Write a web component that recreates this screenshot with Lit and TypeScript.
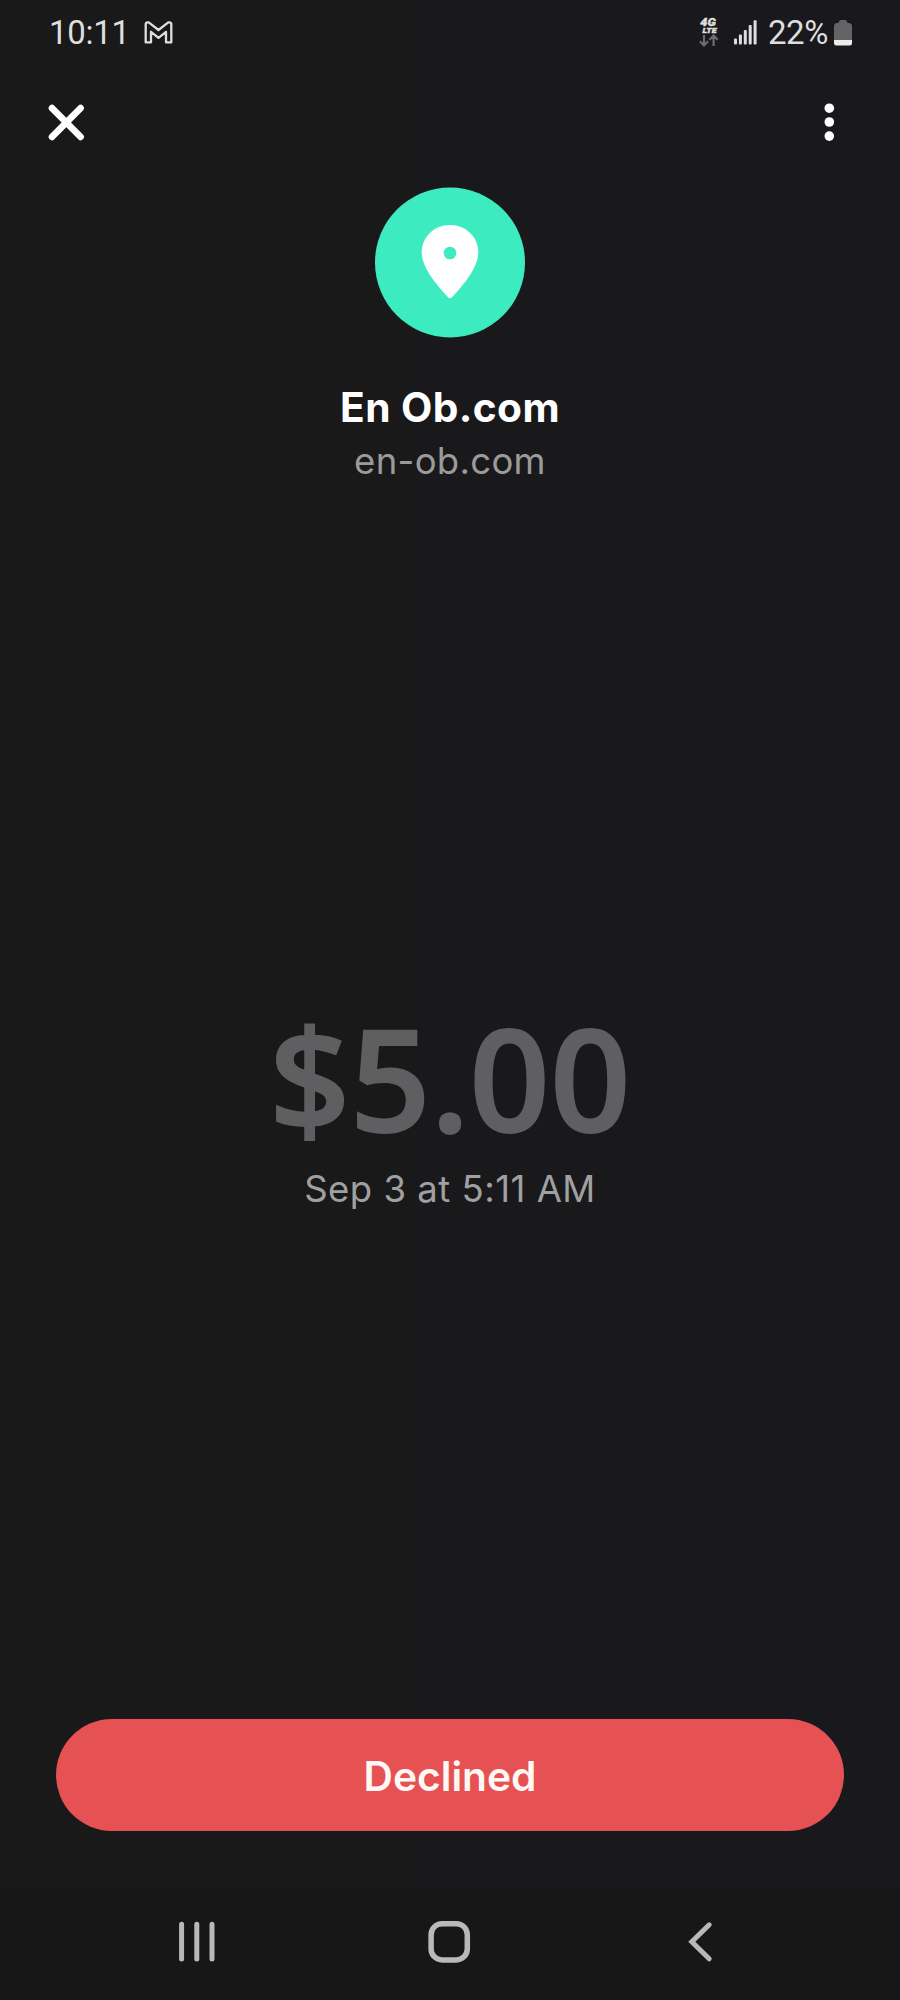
import { LitElement, html, css } from "lit";
import { customElement, property } from "lit/decorators.js";

@customElement("status-bar")
class StatusBar extends LitElement {
  @property() time = "";
  @property() battery = "";
  static styles = css`
    :host { display: flex; align-items: flex-start; justify-content: space-between; height: 64px; padding: 0 48px 0 49px; box-sizing: border-box; color: #dedede; font: 400 33px/65px Roboto, sans-serif; }
    .side { display: flex; align-items: flex-start; }
    svg { display: block; flex: none; overflow: visible; }
    .clock { letter-spacing: -0.3px; }
    .mail { margin: 21px 0 0 14px; }
    .network { margin: 17px 15px 0 0; }
    .signal { margin: 20px 11px 0 0; }
    .percent { letter-spacing: -0.4px; }
    .cell { margin: 20px 0 0 6px; }
  `;
  render() {
    return html`
      <div class="side">
        <span class="clock">${this.time}</span>
        <svg class="mail" width="29" height="24" viewBox="0 0 29 24" fill="none" stroke="#dedede" stroke-width="2.3" stroke-linejoin="round">
          <path d="M1.7 21.4V3.4Q1.7 1.4 3.7 1.4H4.7L14.5 9L24.3 1.4H25.3Q27.3 1.4 27.3 3.4V21.4H22V10.8L14.5 16.8L7 10.8V21.4Z" />
        </svg>
      </div>
      <div class="side">
        <svg class="network" width="20" height="30" viewBox="0 0 20 30">
          <g fill="#dedede" stroke="#dedede" stroke-width="0.4" font-family="Roboto, sans-serif" font-weight="900" font-style="italic">
            <text x="1.3" y="8.6" font-size="11.5" textLength="15.5" lengthAdjust="spacingAndGlyphs">4G</text>
            <text x="3.5" y="15.8" font-size="8" textLength="14" lengthAdjust="spacingAndGlyphs">LTE</text>
          </g>
          <path d="M5 18V28.2M.9 24.2L5 28.4L9.1 24.2M14.6 29V18.8M10.5 22.8L14.6 18.6L18.7 22.8" fill="none" stroke="#6d6d6d" stroke-width="2.2" />
        </svg>
        <svg class="signal" width="23" height="25" viewBox="0 0 23 25" fill="#dedede">
          <rect x="0" y="18.5" width="3" height="6" rx="1" />
          <rect x="4.9" y="14.5" width="3" height="10" rx="1" />
          <rect x="9.8" y="10" width="3" height="14.5" rx="1" />
          <rect x="14.7" y="5" width="3" height="19.5" rx="1" />
          <rect x="19.6" y="0.3" width="3" height="24.2" rx="1" />
        </svg>
        <span class="percent">${this.battery}</span>
        <svg class="cell" width="18" height="26" viewBox="0 0 18 26">
          <path d="M2.5 3H4.6Q5 0 7 0H11Q13 0 13.4 3H15.5Q18 3.4 18 6V20H0V6Q0 3.4 2.5 3Z" fill="#646464" />
          <path d="M0 20H18V23Q18 25.5 15.5 25.5H2.5Q0 25.5 0 23Z" fill="#ececec" />
        </svg>
      </div>
    `;
  }
}

@customElement("system-nav")
class SystemNav extends LitElement {
  static styles = css`
    :host { display: flex; align-items: flex-start; justify-content: space-between; height: 112px; padding: 29px 186px 0 178px; box-sizing: border-box; background: #171718; }
    svg { display: block; overflow: visible; fill: none; stroke: #b9b9ba; }
  `;
  render() {
    return html`
      <svg width="38" height="50" viewBox="0 0 38 50" stroke-width="5" stroke-linecap="round"><path d="M3.6 7.3V41.9M18.8 7.3V41.9M34 7.3V41.9" /></svg>
      <svg width="42" height="50" viewBox="0 0 42 50" stroke-width="5.5"><rect x="1.1" y="6.7" width="36.2" height="36.2" rx="11" /></svg>
      <svg width="28" height="50" viewBox="0 0 28 50" stroke-width="5" stroke-linecap="round"><path d="M23.2 7.8L5.8 24.8L23.2 41.8" /></svg>
    `;
  }
}

@customElement("app-root")
class AppRoot extends LitElement {
  static styles = css`
    :host { display: flex; flex-direction: column; height: 2000px; box-sizing: border-box; background: linear-gradient(90deg, #191919 0, #191919 40%, #19191c 52%, #19191d 100%); color: #fff; font-family: Inter, sans-serif; }
    svg { display: block; overflow: visible; }
    .tools { display: flex; align-items: flex-start; justify-content: space-between; height: 123px; padding: 40px 62px 0 48px; box-sizing: border-box; }
    .merchant { display: flex; flex-direction: column; align-items: center; }
    .name { margin: 45px 0 0; font-size: 40.7px; line-height: 50px; font-weight: 700; letter-spacing: 0.4px; white-space: nowrap; }
    .site { margin-top: 4px; font-size: 36.5px; line-height: 48px; letter-spacing: 0.3px; color: #9b9b9b; white-space: nowrap; }
    .payment { display: flex; flex-direction: column; align-items: center; margin-top: 512px; }
    .amount { font-family: "Open Sans", sans-serif; font-size: 141px; line-height: 160px; font-weight: 600; -webkit-text-stroke: 1.8px #5f5f61; color: #5f5f61; white-space: nowrap; }
    .date { margin-top: 8px; font-size: 36.5px; line-height: 48px; letter-spacing: 0.5px; color: #a0a0a1; white-space: nowrap; }
    .status { display: flex; align-items: center; justify-content: center; height: 112px; padding-top: 4px; box-sizing: border-box; margin: auto 56px 57px; border-radius: 56px; background: #e65253; font-size: 40.7px; line-height: 50px; font-weight: 600; color: #fff8f4; }
  `;
  render() {
    return html`
      <status-bar time="10:11" battery="22%"></status-bar>
      <div class="tools">
        <svg width="38" height="38" viewBox="0 0 38 38" stroke="#fff" stroke-width="6.6" stroke-linecap="round"><path d="M4 4.1L32.6 32.9M32.6 4.1L4 32.9" /></svg>
        <svg width="18" height="40" viewBox="0 0 18 40" fill="#fff"><circle cx="9.3" cy="4.2" r="4.8" /><circle cx="9.3" cy="18" r="4.8" /><circle cx="9.3" cy="32.1" r="4.8" /></svg>
      </div>
      <div class="merchant">
        <svg width="150" height="151" viewBox="0 0 150 151">
          <circle cx="75" cy="75.5" r="75" fill="#3debc0" />
          <path d="M75 38C59 38 46.7 50 46.7 65.5C46.7 79 58 94 73 110.2Q75 112 77 110.2C92 94 103.3 79 103.3 65.5C103.3 50 91 38 75 38Z" fill="#fff" />
          <circle cx="75" cy="66" r="6.3" fill="#3debc0" />
        </svg>
        <h1 class="name">En Ob.com</h1>
        <div class="site">en-ob.com</div>
      </div>
      <div class="payment">
        <div class="amount">$5.00</div>
        <div class="date">Sep 3 at 5:11 AM</div>
      </div>
      <div class="status">Declined</div>
      <system-nav></system-nav>
    `;
  }
}
